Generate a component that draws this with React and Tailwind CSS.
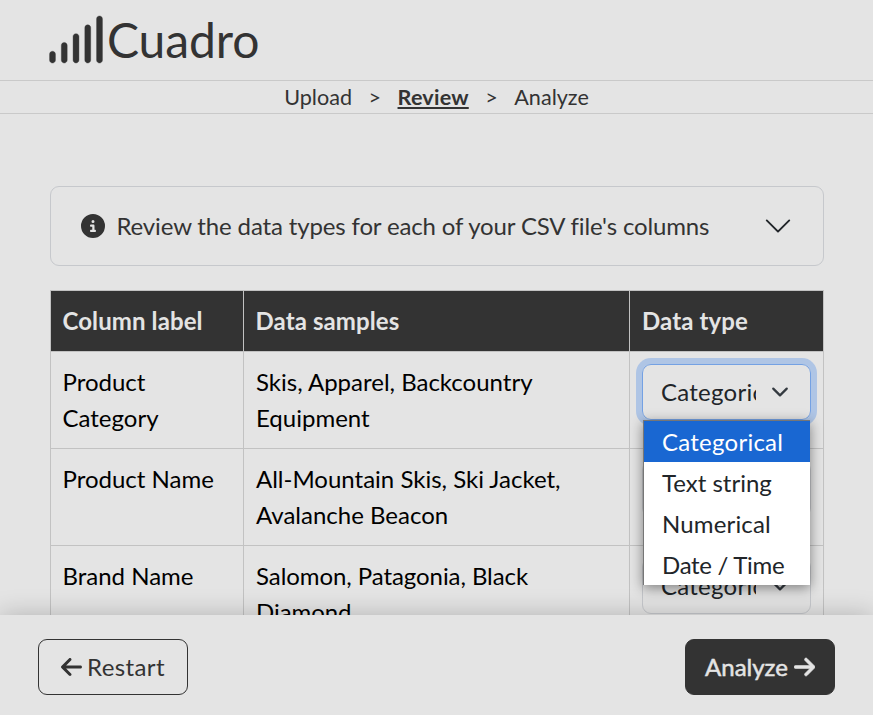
import { FaSignal, FaCircleInfo, FaArrowLeft, FaArrowRight } from 'react-icons/fa6';

const rows = [
  { label: 'Product Category', samples: 'Skis, Apparel, Backcountry Equipment', focused: true },
  { label: 'Product Name', samples: 'All-Mountain Skis, Ski Jacket, Avalanche Beacon' },
  { label: 'Brand Name', samples: 'Salomon, Patagonia, Black Diamond', tight: true },
];

const options = [
  { name: 'Categorical', tracking: 'tracking-[0.25px]' },
  { name: 'Text string', tracking: 'tracking-normal' },
  { name: 'Numerical', tracking: 'tracking-[0.15px]' },
  { name: 'Date / Time', tracking: 'tracking-[-0.3px]' },
];

function TypeSelect({ focused }) {
  return (
    <div
      className={
        'relative flex h-14 w-[169px] items-center rounded-[9px] border pl-[18px] text-[#212529] ' +
        (focused ? 'border-[#74a1e3] shadow-[0_0_0_6px_#afc5e5]' : 'border-[#c6c8cc]')
      }
    >
      <span className="w-[95px] overflow-hidden whitespace-nowrap tracking-[0.25px]">Categorical</span>
      <svg viewBox="0 0 16 16" className="ml-[15px] h-[18px] w-[18px]" fill="none" stroke="#343a40" strokeLinecap="round" strokeLinejoin="round" strokeWidth="2">
        <path d="m2 5 6 6 6-6" />
      </svg>
      {focused && (
        <ul className="absolute left-0 top-[55px] z-10 w-[167px] border-l border-t border-[#767676] bg-white shadow-[0_3px_12px_rgba(0,0,0,0.45)]">
          {options.map((option, i) => (
            <li
              key={option.name}
              className={
                'h-[41px] pl-[18px] leading-[42px] ' +
                option.tracking +
                (i === 0 ? ' bg-[#1967d2] text-white' : ' text-[#212529]')
              }
            >
              {option.name}
            </li>
          ))}
        </ul>
      )}
    </div>
  );
}

export default function App() {
  return (
    <div className="flex h-[715px] flex-col overflow-hidden bg-[#e4e4e4] font-['Lato',sans-serif] text-2xl leading-9 text-[#333]">
      <header className="flex h-20 shrink-0 items-center pl-[46px]">
        <FaSignal className="-mt-px h-[47px] w-[60px] overflow-visible" stroke="#333" strokeWidth="4" />
        <span className="ml-px text-[48px] leading-[72px] tracking-[-0.1px]">Cuadro</span>
      </header>
      <nav className="flex h-[34px] shrink-0 items-center justify-center gap-[16.5px] border-y border-[#c9c9c9] text-[21.6px] leading-8">
        <span>Upload</span>
        <span>&gt;</span>
        <span className="font-bold tracking-[0.2px] underline">Review</span>
        <span>&gt;</span>
        <span>Analyze</span>
      </nav>
      <main className="min-h-0 flex-1 overflow-hidden px-[50px] pt-[72px]">
        <section className="flex h-20 w-[774px] items-center rounded-[9px] border border-[#c6c8cc] pl-[29.5px] pr-[30px]">
          <FaCircleInfo className="h-6 w-6" />
          <span className="ml-3 flex-1 tracking-[-0.145px]">Review the data types for each of your CSV file's columns</span>
          <svg viewBox="0 0 16 16" className="h-[30px] w-[30px]" fill="#212529">
            <path fillRule="evenodd" d="M1.646 4.646a.5.5 0 0 1 .708 0L8 10.293l5.646-5.647a.5.5 0 0 1 .708.708l-6 6a.5.5 0 0 1-.708 0l-6-6a.5.5 0 0 1 0-.708" />
          </svg>
        </section>
        <table className="mt-6 w-[774px] table-fixed border-collapse text-left">
          <thead>
            <tr className="h-[61px] bg-[#333] tracking-[0.1px] text-[#e4e4e4]">
              <th className="w-[193px] border border-[#c2c2c2] px-[11.5px] font-bold">Column label</th>
              <th className="w-[386px] border border-[#c2c2c2] px-[11.5px] font-bold">Data samples</th>
              <th className="border border-[#c2c2c2] px-3 font-bold">Data type</th>
            </tr>
          </thead>
          <tbody>
            {rows.map((row) => (
              <tr key={row.label} className="h-[97px] align-top text-black">
                <td className="border border-[#c2c2c2] px-[11.5px] py-3">{row.label}</td>
                <td className={'border border-[#c2c2c2] p-3 ' + (row.tight ? 'tracking-[-0.07px]' : '')}>{row.samples}</td>
                <td className="border border-[#c2c2c2] p-3">
                  <TypeSelect focused={row.focused} />
                </td>
              </tr>
            ))}
          </tbody>
        </table>
      </main>
      <footer className="relative flex h-[100px] shrink-0 items-start justify-between bg-[#e4e4e4] px-[38px] pt-6 shadow-[0_0_24px_rgba(0,0,0,0.22)]">
        <button className="flex h-14 w-[150px] items-center justify-center gap-[5px] rounded-[9px] border border-[#333]">
          <FaArrowLeft className="h-6 w-[21px]" />
          <span className="tracking-[0.4px]">Restart</span>
        </button>
        <button className="flex h-14 w-[150px] items-center justify-center gap-[6px] rounded-[9px] border border-[#333] bg-[#333] text-[#e4e4e4]">
          <span className="[-webkit-text-stroke:0.5px_#e4e4e4]">Analyze</span>
          <FaArrowRight className="h-6 w-[21px]" stroke="#e4e4e4" strokeWidth="12" />
        </button>
      </footer>
    </div>
  );
}
